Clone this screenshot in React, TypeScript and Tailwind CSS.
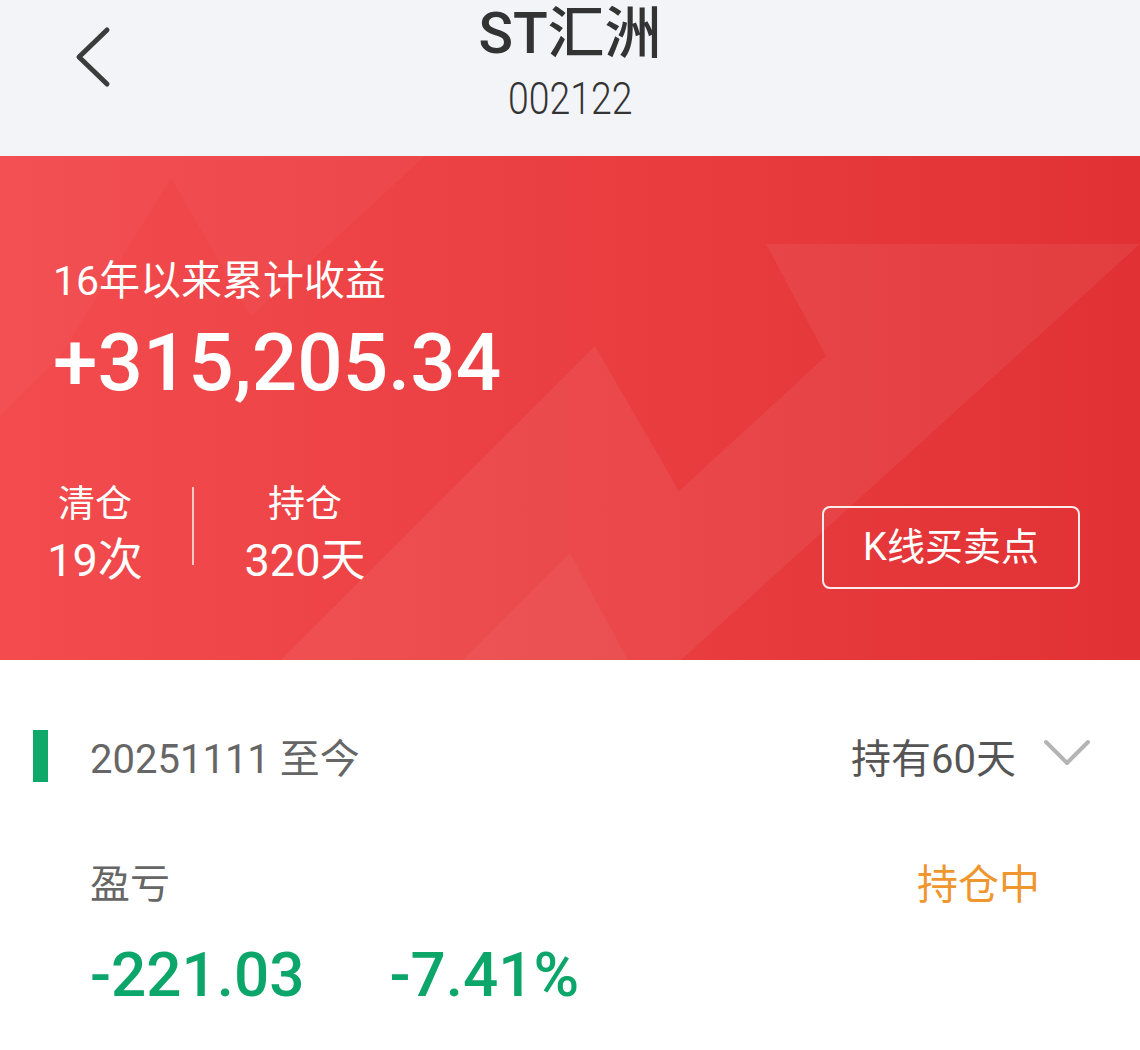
function Stat({ label, value, width }: { label: string; value: string; width: string }) {
  return (
    <div className={`flex flex-col items-center whitespace-nowrap ${width}`}>
      <div className="text-[37px] leading-[44px]">{label}</div>
      <div className="mt-[8px] text-[45px] leading-[52px]">{value}</div>
    </div>
  )
}

function BannerShapes() {
  return (
    <svg className="absolute inset-0 h-full w-full" viewBox="0 0 1140 504" preserveAspectRatio="none">
      <polygon points="0,0 425,0 251,160 171,22 60,200 0,260" fill="#ffffff" fillOpacity="0.03" />
      <polygon points="281,504 595,190 679,335 826,200 766,88 1140,88 681,504" fill="#ffffff" fillOpacity="0.06" />
      <polygon points="463,504 570,397 628,504" fill="#ffffff" fillOpacity="0.04" />
    </svg>
  )
}

export default function App() {
  return (
    <div className="w-[1140px] h-[1050px] overflow-hidden bg-white font-['Roboto','Noto_Sans_CJK_SC',sans-serif]">
      {/* header */}
      <header className="grid h-[156px] grid-cols-[200px_1fr_200px] bg-[#f3f4f8]">
        <div className="flex pl-[74px] pt-[26px]">
          <svg width="40" height="62" viewBox="0 0 40 62">
            <polyline points="33,4 5,31 33,58" fill="none" stroke="#3c3c3c" strokeWidth="5" strokeLinecap="round" strokeLinejoin="round" />
          </svg>
        </div>
        <div className="flex flex-col items-center pt-[3px]">
          <div className="text-[57px] leading-[62px] font-medium text-[#333]">ST汇洲</div>
          <div className="mt-[14px] scale-x-[0.85] text-[44px] leading-[40px] font-light text-[#333]">002122</div>
        </div>
        <div />
      </header>

      {/* red summary banner */}
      <section className="relative h-[504px] overflow-hidden bg-gradient-to-r from-[#f34b4e] to-[#e13134] text-white">
        <BannerShapes />
        <div className="relative pl-[53px] pr-[60px] pt-[101px]">
          <div className="text-[41px] leading-[48px]">16年以来累计收益</div>
          <div className="mt-[13px] text-[80px] leading-[90px] font-medium">+315,205.34</div>
          <div className="mt-[75px] flex items-start">
            <div className="-ml-[5px] flex items-start">
              <Stat label="清仓" value="19次" width="w-[94px]" />
              <div className="ml-[50px] mt-[4px] h-[78px] w-[2px] bg-white/70" />
              <div className="ml-[46px]">
                <Stat label="持仓" value="320天" width="w-[130px]" />
              </div>
            </div>
            <button className="ml-auto mt-[23px] flex h-[83px] w-[258px] items-center justify-center rounded-[8px] border-2 border-white/90 text-[38px]">
              K线买卖点
            </button>
          </div>
        </div>
      </section>

      {/* holding period */}
      <section className="pt-[70px]">
        <div className="flex h-[52px] items-center pr-[50px]">
          <div className="ml-[33px] h-[52px] w-[15px] bg-[#0ea968]" />
          <div className="ml-[42px] mt-[8px] text-[40px] leading-[48px] text-[#666]">20251111 至今</div>
          <div className="ml-auto mt-[8px] flex items-center">
            <span className="text-[40px] leading-[48px] text-[#555]">持有60天</span>
            <svg className="ml-[28px] -mt-[14px]" width="46" height="28" viewBox="0 0 46 28">
              <polyline points="2,3 23,24 44,3" fill="none" stroke="#b4b4b4" strokeWidth="4" strokeLinecap="round" strokeLinejoin="round" />
            </svg>
          </div>
        </div>

        <div className="mt-[79px] flex items-center justify-between pl-[90px] pr-[100px]">
          <span className="text-[40px] leading-[48px] text-[#666]">盈亏</span>
          <span className="text-[41px] leading-[48px] text-[#f0962e]">持仓中</span>
        </div>

        <div className="mt-[31px] flex gap-[85px] pl-[90px] text-[62px] leading-[70px] font-medium text-[#0ca56a]">
          <span>-221.03</span>
          <span>-7.41%</span>
        </div>
      </section>
    </div>
  )
}
